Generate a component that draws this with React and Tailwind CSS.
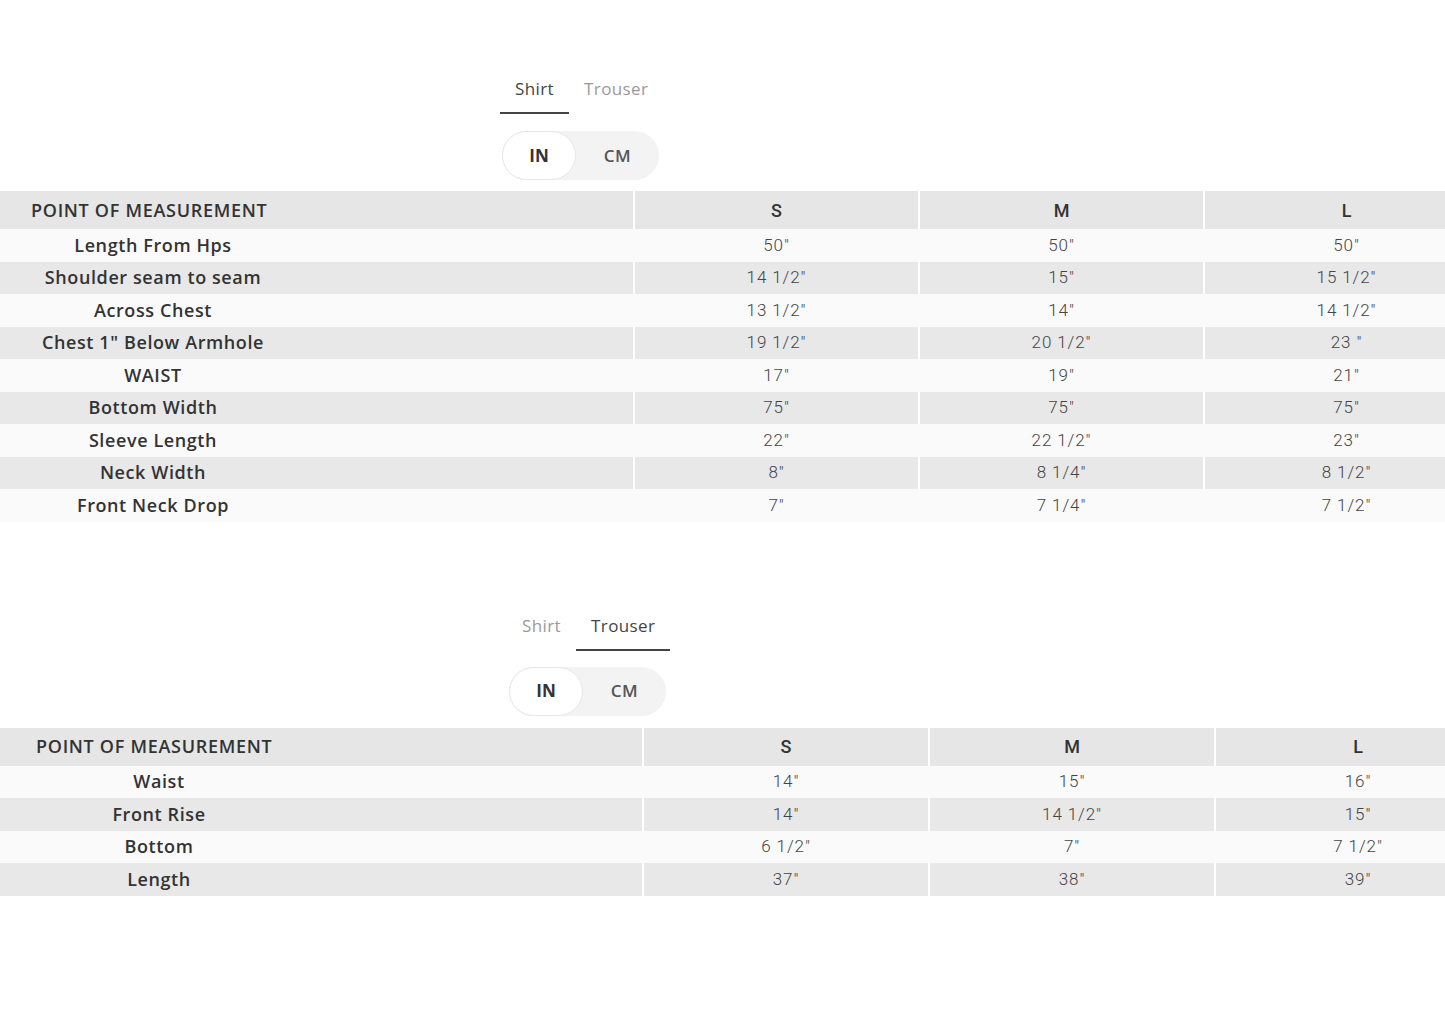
import React from 'react';

// size chart data
const shirtRows = [
  ['Length From Hps', '50"', '50"', '50"'],
  ['Shoulder seam to seam', '14 1/2"', '15"', '15 1/2"'],
  ['Across Chest', '13 1/2"', '14"', '14 1/2"'],
  ['Chest 1" Below Armhole', '19 1/2"', '20 1/2"', '23 "'],
  ['WAIST', '17"', '19"', '21"'],
  ['Bottom Width', '75"', '75"', '75"'],
  ['Sleeve Length', '22"', '22 1/2"', '23"'],
  ['Neck Width', '8"', '8 1/4"', '8 1/2"'],
  ['Front Neck Drop', '7"', '7 1/4"', '7 1/2"'],
];

const trouserRows = [
  ['Waist', '14"', '15"', '16"'],
  ['Front Rise', '14"', '14 1/2"', '15"'],
  ['Bottom', '6 1/2"', '7"', '7 1/2"'],
  ['Length', '37"', '38"', '39"'],
];

const labelFont = { fontFamily: '"Open Sans", "Liberation Sans", sans-serif' };
const numFont = { fontFamily: 'Roboto, "Liberation Sans", sans-serif' };

function Tabs({ active, big }) {
  return (
    <div className={`flex ${big ? 'pl-[507px]' : 'pl-[500px]'}`}>
      {['Shirt', 'Trouser'].map(t => (
        <div
          key={t}
          style={labelFont}
          className={`px-[15px] h-[44px] pt-[7px] text-[17px] leading-[24px] tracking-[0.4px] border-b-2 ${
            t === active ? 'text-[#444] border-[#444]' : 'text-[#9a9a9a] border-transparent'
          }`}
        >
          {t}
        </div>
      ))}
    </div>
  );
}

function UnitToggle({ big }) {
  return (
    <div className={`flex ${big ? 'pl-[509px] mt-[16px]' : 'pl-[502px] mt-[17px]'}`}>
      <div className="flex items-center h-[49px] w-[157px] rounded-full bg-[#f3f3f3]">
        <div
          style={labelFont}
          className="h-[49px] w-[74px] rounded-full bg-white border border-[#e6e6e6] flex items-center justify-center text-[17px] font-bold text-[#333]"
        >
          IN
        </div>
        <div
          style={labelFont}
          className="flex-1 flex items-center justify-center text-[17px] font-semibold text-[#555] tracking-[0.5px]"
        >
          CM
        </div>
      </div>
    </div>
  );
}

function SizeTable({ rows, big }) {
  const first = big ? 'w-[642px]' : 'w-[633px]';
  const col = big ? 'w-[286px]' : 'w-[285px]';
  const labelW = big ? 'w-[318px]' : 'w-[306px]';
  return (
    <div className="w-[1520px]">
      <div className="flex h-[38px] bg-[#e6e6e6] text-[#333]">
        <div
          style={labelFont}
          className={`${first} shrink-0 flex items-center text-[18px] font-semibold tracking-[0.7px] ${big ? 'pl-[36px]' : 'pl-[31px]'}`}
        >
          POINT OF MEASUREMENT
        </div>
        {['S', 'M', 'L'].map(s => (
          <div
            key={s}
            style={numFont}
            className={`${col} shrink-0 border-l-2 border-white flex items-center justify-center text-[18px] font-medium`}
          >
            {s}
          </div>
        ))}
      </div>
      {rows.map((r, i) => (
        <div
          key={r[0]}
          className={`flex h-[32.5px] ${i % 2 === 0 ? 'bg-[#fafafa]' : 'bg-[#e8e8e8]'}`}
        >
          <div className={`${first} shrink-0 flex items-center`}>
            <div style={labelFont} className={`${labelW} text-center text-[18px] font-semibold tracking-[0.6px] text-[#333]`}>
              {r[0]}
            </div>
          </div>
          {r.slice(1).map((v, j) => (
            <div
              key={j}
              style={numFont}
              className={`${col} shrink-0 border-l-2 ${i % 2 === 0 ? 'border-[#fafafa]' : 'border-white'} flex items-center justify-center text-[17px] font-light text-[#444] tracking-[0.9px]`}
            >
              {v}
            </div>
          ))}
        </div>
      ))}
    </div>
  );
}

export default function App() {
  return (
    <div className="w-[1445px] h-[1022px] bg-white overflow-hidden">
      <div className="pt-[70px]">
        <Tabs active="Shirt" />
        <UnitToggle />
        <div className="mt-[11px]">
          <SizeTable rows={shirtRows} />
        </div>
      </div>
      <div className="pt-[85px]">
        <Tabs active="Trouser" big />
        <UnitToggle big />
        <div className="mt-[12px]">
          <SizeTable rows={trouserRows} big />
        </div>
      </div>
    </div>
  );
}
